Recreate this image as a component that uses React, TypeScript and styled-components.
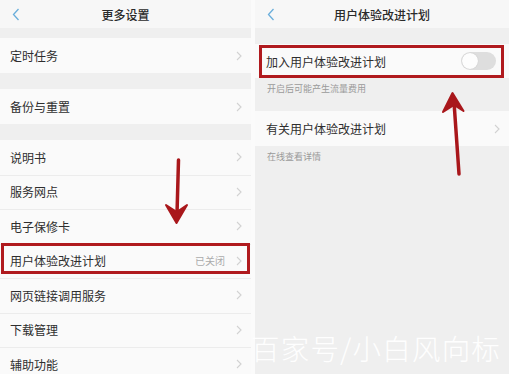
import React from "react";
import styled, { createGlobalStyle, css } from "styled-components";

const GlobalStyle = createGlobalStyle`
  html, body { margin: 0; padding: 0; background: #efefef; }
  body { font-family: "Noto Sans CJK SC", "Noto Sans", sans-serif; }
`;

const Screen = styled.div`
  position: relative;
  width: 509px;
  height: 374px;
  display: flex;
  overflow: hidden;
  background: #efefef;
`;

const Panel = styled.div<{ $width?: number }>`
  display: flex;
  flex-direction: column;
  background: #efefef;
  ${(p) => (p.$width ? css`width: ${p.$width}px; flex: none;` : css`flex: 1;`)}
`;

const Divider = styled.div`
  width: 4px;
  flex: none;
  background: #fbfbfb;
`;

const Header = styled.div`
  height: 28px;
  flex: none;
  display: grid;
  grid-template-columns: 30px 1fr 30px;
  align-items: center;
  background: #f7f7f7;
`;

const Back = styled.div`
  display: flex;
  align-items: center;
  padding-left: 12px;
`;

const Title = styled.div`
  text-align: center;
  font-size: 12px;
  color: #2a2a2a;
  font-weight: 500;
`;

const Group = styled.div<{ $top: number }>`
  margin-top: ${(p) => p.$top}px;
  background: #fafafa;
  display: flex;
  flex-direction: column;
`;

const Row = styled.div<{ $h?: number; $highlight?: "left" | "right" }>`
  position: relative;
  height: ${(p) => p.$h ?? 34.5}px;
  flex: none;
  display: flex;
  align-items: center;
  padding: 0 9px 0 10px;
  box-sizing: border-box;
  & + & { box-shadow: inset 0 1px 0 #ececec; }
  ${(p) =>
    p.$highlight === "left" &&
    css`
      &::after {
        content: "";
        position: absolute;
        left: 1px;
        right: 1px;
        top: -1px;
        bottom: 4px;
        border: 3px solid #b01a1e;
      }
    `}
  ${(p) =>
    p.$highlight === "right" &&
    css`
      &::after {
        content: "";
        position: absolute;
        left: 4px;
        right: 5px;
        top: 1px;
        bottom: 0px;
        border: 3px solid #b01a1e;
      }
    `}
`;

const Label = styled.div<{ $pad?: number }>`
  flex: 1;
  font-size: 12px;
  color: #2e2e2e;
  padding-left: ${(p) => p.$pad ?? 0}px;
  white-space: nowrap;
`;

const Value = styled.div`
  font-size: 10px;
  color: #ababab;
  margin-right: 11px;
`;

const Caption = styled.div<{ $h: number }>`
  height: ${(p) => p.$h}px;
  flex: none;
  box-sizing: border-box;
  padding: 4px 0 0 12px;
  font-size: 9px;
  color: #9a9a9a;
`;

const Track = styled.div`
  width: 35px;
  height: 18px;
  border-radius: 9px;
  background: #dedede;
  position: relative;
  margin-right: 4px;
`;

const Knob = styled.div`
  position: absolute;
  left: 1px;
  top: 1px;
  width: 16px;
  height: 16px;
  border-radius: 50%;
  background: #fdfdfd;
  box-shadow: 0 0 1px rgba(0, 0, 0, 0.2);
`;

const Overlay = styled.svg`
  position: absolute;
  left: 0;
  top: 0;
  pointer-events: none;
`;

const Watermark = styled.div`
  position: absolute;
  left: 251px;
  top: 328px;
  font-family: "Noto Sans CJK SC", sans-serif;
  font-weight: 300;
  font-size: 28.5px;
  letter-spacing: 1.2px;
  color: rgba(255, 255, 255, 0.95);
  white-space: nowrap;
  line-height: 40px;
`;

const BackIcon = () => (
  <svg width="8" height="13" viewBox="0 0 8 13">
    <path d="M6.5 1 L1.5 6.5 L6.5 12" fill="none" stroke="#6aaedb" strokeWidth="1.3" />
  </svg>
);

const Chevron = () => (
  <svg width="6" height="10" viewBox="0 0 6 10">
    <path d="M1 1 L5 5 L1 9" fill="none" stroke="#d2d2d2" strokeWidth="1.1" />
  </svg>
);

const Toggle = () => (
  <Track>
    <Knob />
  </Track>
);

export default function App() {
  return (
    <>
      <GlobalStyle />
      <Screen>
        <Panel $width={251}>
          <Header>
            <Back><BackIcon /></Back>
            <Title>更多设置</Title>
            <div />
          </Header>
          <Group $top={10}>
            <Row $h={35}>
              <Label>定时任务</Label>
              <Chevron />
            </Row>
          </Group>
          <Group $top={16}>
            <Row $h={35}>
              <Label>备份与重置</Label>
              <Chevron />
            </Row>
          </Group>
          <Group $top={16}>
            <Row>
              <Label>说明书</Label>
              <Chevron />
            </Row>
            <Row>
              <Label>服务网点</Label>
              <Chevron />
            </Row>
            <Row>
              <Label>电子保修卡</Label>
              <Chevron />
            </Row>
            <Row $highlight="left">
              <Label>用户体验改进计划</Label>
              <Value>已关闭</Value>
              <Chevron />
            </Row>
            <Row>
              <Label>网页链接调用服务</Label>
              <Chevron />
            </Row>
            <Row>
              <Label>下载管理</Label>
              <Chevron />
            </Row>
            <Row>
              <Label>辅助功能</Label>
              <Chevron />
            </Row>
          </Group>
        </Panel>
        <Divider />
        <Panel>
          <Header>
            <Back><BackIcon /></Back>
            <Title>用户体验改进计划</Title>
            <div />
          </Header>
          <Group $top={16}>
            <Row $h={34} $highlight="right">
              <Label $pad={1}>加入用户体验改进计划</Label>
              <Toggle />
            </Row>
          </Group>
          <Caption $h={33}>开启后可能产生流量费用</Caption>
          <Group $top={0}>
            <Row $h={35}>
              <Label $pad={1}>有关用户体验改进计划</Label>
              <Chevron />
            </Row>
          </Group>
          <Caption $h={30}>在线查看详情</Caption>
        </Panel>
        <Overlay width={509} height={374} viewBox="0 0 509 374">
          <g fill="#a9171b" stroke="#a9171b" strokeLinecap="round" strokeLinejoin="round">
            <line x1="178.5" y1="160" x2="177" y2="214" strokeWidth="3.5" />
            <path d="M176.5 223 L166 205 L176.8 212 L187 205 Z" strokeWidth="2" />
            <line x1="459" y1="174" x2="454" y2="102" strokeWidth="3.5" />
            <path d="M452.5 93 L443 112 L454 105 L463.5 111 Z" strokeWidth="2" />
          </g>
        </Overlay>
        <Watermark>百家号/小白风向标</Watermark>
      </Screen>
    </>
  );
}
